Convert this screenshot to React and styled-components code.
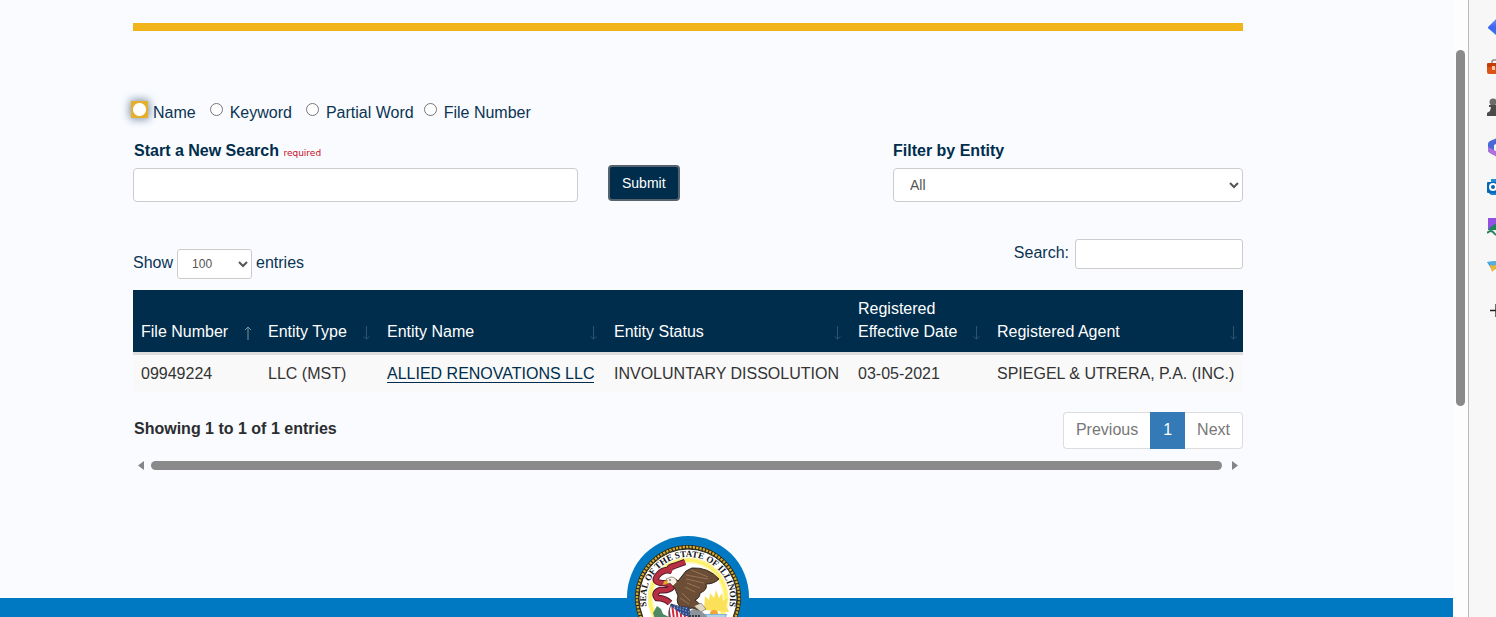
import React, { useState } from 'react'
import styled, { createGlobalStyle } from 'styled-components'

const GlobalStyle = createGlobalStyle`
  * {
    box-sizing: border-box;
  }

  body {
    margin: 0;
    background: #f9fbff;
    color: #0b3453;
    font-family: Arial, 'Liberation Sans', sans-serif;
    font-size: 16px;
    line-height: 23px;
  }
`

const Shell = styled.div`
  display: grid;
  grid-template-columns: minmax(0, 1fr) 15px 28px;
  height: 100vh;
  overflow: hidden;
`

const Page = styled.div`
  display: flex;
  flex-direction: column;
  min-height: 100vh;
`

const Content = styled.main`
  padding-right: 77px;
`

const Container = styled.div`
  max-width: 1110px;
  margin: 0 auto;
`

const Rule = styled.hr`
  height: 8px;
  margin: 23px 0 70px;
  border: 0;
  background: #f2b41b;
`

const Options = styled.fieldset`
  display: flex;
  flex-wrap: wrap;
  margin: 0;
  padding: 0;
  border: 0;
`

const Option = styled.label`
  display: flex;
  gap: 7px;
  margin-right: ${(props) => (props.$tight ? '10px' : '14px')};
`

const Radio = styled.input`
  width: 13px;
  height: 13px;
  margin: 2px 0 0;

  ${(props) =>
    props.$highlight &&
    `
    appearance: none;
    background: radial-gradient(circle, #ffffff 6px, #e5ae2b 7px);
    box-shadow: 0 0 0 2px #e5ae2b, 0 0 8px 3px #7488a0;

    &:checked {
      background: radial-gradient(circle, #0075ff 3px, #ffffff 4px, #ffffff 6px, #e5ae2b 7px);
    }
  `}
`

const SearchRow = styled.div`
  display: grid;
  grid-template-columns: 5fr 3fr 4fr;
  margin: 15px -15px 0;
`

const Column = styled.div`
  padding: 0 15px;
`

const FieldLabel = styled.label`
  display: block;
  margin-bottom: 6px;
  padding-left: ${(props) => (props.$indent ? '1px' : '0')};
  color: #002d4c;
  font-weight: bold;
`

const Required = styled.span`
  color: #c80a1e;
  font-family: 'DejaVu Sans', Verdana, sans-serif;
  font-size: 9px;
  font-weight: normal;
  line-height: 1;
`

const TextInput = styled.input`
  width: ${(props) => (props.$small ? '168px' : '100%')};
  height: ${(props) => (props.$small ? '30px' : '34px')};
  padding: 5px 10px;
  border: 1px solid #cccccc;
  border-radius: ${(props) => (props.$small ? '3px' : '4px')};
  background: #ffffff;
  color: #555555;
  font: inherit;
`

const Select = styled.select`
  width: ${(props) => (props.$small ? '75px' : '100%')};
  height: ${(props) => (props.$small ? '30px' : '34px')};
  padding: ${(props) => (props.$small ? '5px 10px' : '6px 12px')};
  border: 1px solid #cccccc;
  border-radius: ${(props) => (props.$small ? '3px' : '4px')};
  background: #ffffff;
  color: #555555;
  font-family: inherit;
  font-size: ${(props) => (props.$small ? '12px' : '14px')};
`

const SubmitButton = styled.button`
  height: 36px;
  margin-top: 26px;
  padding: 0 12px;
  border: 2px solid #56636c;
  border-radius: 4px;
  background: #002d4c;
  color: #ffffff;
  font-family: inherit;
  font-size: 14px;
`

const TableControls = styled.div`
  display: flex;
  justify-content: space-between;
  align-items: flex-start;
  margin-top: 37px;
  margin-bottom: 11px;
`

const Control = styled.label`
  display: flex;
  gap: ${(props) => (props.$wide ? '6px' : '4px')};
  margin-top: ${(props) => (props.$lower ? '10px' : '0')};

  span {
    padding-top: 2px;
  }
`

const Table = styled.table`
  width: 100%;
  border-collapse: collapse;
  table-layout: fixed;
`

const Col = styled.col`
  width: ${(props) => props.$width};
`

const TableHeader = styled.th`
  padding: 7px 8px 9px;
  border-bottom: 3px solid #dddddd;
  background: #002d4c;
  background-clip: padding-box;
  vertical-align: bottom;

  &:last-child {
    padding-right: 5px;
  }
`

const SortButton = styled.button`
  display: flex;
  justify-content: space-between;
  align-items: flex-end;
  width: 100%;
  padding: 0;
  border: 0;
  background: none;
  color: #ffffff;
  font: inherit;
  font-weight: normal;
  text-align: left;
`

const SortIcon = styled.svg`
  flex: none;
  width: 8px;
  height: 16px;
  margin-bottom: 2px;
  fill: none;
  stroke: ${(props) => (props.$active ? '#7693a7' : '#2f536e')};
`

const TableCell = styled.td`
  padding: 7px 8px;
  background: #f9f9f9;
  color: #333333;
  white-space: nowrap;
`

const EntityLink = styled.a`
  border-bottom: 1px solid #002d4c;
  color: #002d4c;
  text-decoration: none;
`

const TableFooter = styled.div`
  display: flex;
  justify-content: space-between;
  margin-top: 20px;
`

const Summary = styled.div`
  padding: 5px 1px;
  color: #2b2d30;
  font-weight: bold;
`

const Pagination = styled.nav`
  display: flex;
`

const PageButton = styled.button`
  padding: 5px 12px 7px;
  border: 1px solid ${(props) => (props.$active ? '#337ab7' : '#dddddd')};
  border-left-width: ${(props) => (props.$first || props.$active ? '1px' : '0')};
  border-right-width: ${(props) => (props.$first ? '0' : '1px')};
  border-radius: ${(props) =>
    props.$first ? '4px 0 0 4px' : props.$last ? '0 4px 4px 0' : '0'};
  background: ${(props) => (props.$active ? '#337ab7' : '#ffffff')};
  color: ${(props) => (props.$active ? '#ffffff' : '#777777')};
  font: inherit;
`

const HorizontalScroll = styled.div`
  display: flex;
  align-items: center;
  gap: 7px;
  margin-top: 12px;
  padding: 0 5px;

  svg {
    flex: none;
    width: 6px;
    height: 9px;
    fill: #858585;
  }
`

const HorizontalThumb = styled.div`
  flex: 1;
  height: 9px;
  margin-right: 3px;
  border-radius: 5px;
  background: #8a8a8a;
`

const Footer = styled.footer`
  flex: 1;
  display: flex;
  justify-content: center;
  align-items: flex-start;
  margin-top: 128px;
  padding-right: 77px;
  background: #0079c2;
`

const SealImage = styled.svg`
  flex: none;
  width: 122px;
  height: 122px;
  margin-top: -62px;
`

const ScrollTrack = styled.div`
  padding: 50px 3px 0;
  background: #fdfdfd;
`

const ScrollThumb = styled.div`
  height: 356px;
  border-radius: 5px;
  background: #8a8a8a;
`

const Sidebar = styled.aside`
  display: flex;
  flex-direction: column;
  gap: 20px;
  padding: 17px 0 0 18px;
  overflow: hidden;
  border-left: 1px solid #b9b9b9;
  background: #f7f7f7;

  svg {
    flex: none;
    width: 20px;
    height: 20px;
  }

  svg:last-child {
    margin-top: 4px;
  }
`

const searchTypes = ['Name', 'Keyword', 'Partial Word', 'File Number']

const columns = [
  { label: 'File Number', width: '127px' },
  { label: 'Entity Type', width: '119px' },
  { label: 'Entity Name', width: '227px' },
  { label: 'Entity Status', width: '244px' },
  { label: 'Registered Effective Date', width: '139px' },
  { label: 'Registered Agent', width: 'auto' },
]

const entities = [
  {
    fileNumber: '09949224',
    type: 'LLC (MST)',
    name: 'ALLIED RENOVATIONS LLC',
    status: 'INVOLUNTARY DISSOLUTION',
    date: '03-05-2021',
    agent: 'SPIEGEL & UTRERA, P.A. (INC.)',
  },
]

function SearchForm() {
  const [searchType, setSearchType] = useState('')
  const [term, setTerm] = useState('')

  return (
    <form onSubmit={(e) => e.preventDefault()}>
      <Options aria-label="Search type">
        {searchTypes.map((type, index) => (
          <Option key={type} $tight={index === 2}>
            <Radio
              type="radio"
              name="searchType"
              checked={searchType === type}
              onChange={() => setSearchType(type)}
              $highlight={index === 0}
            />
            {type}
          </Option>
        ))}
      </Options>
      <SearchRow>
        <Column>
          <FieldLabel htmlFor="term" $indent>
            Start a New Search <Required>required</Required>
          </FieldLabel>
          <TextInput
            id="term"
            type="text"
            value={term}
            onChange={(e) => setTerm(e.target.value)}
          />
        </Column>
        <Column>
          <SubmitButton type="submit">Submit</SubmitButton>
        </Column>
        <Column>
          <FieldLabel htmlFor="entityFilter">Filter by Entity</FieldLabel>
          <Select id="entityFilter">
            <option>All</option>
          </Select>
        </Column>
      </SearchRow>
    </form>
  )
}

function EntityTable() {
  return (
    <Table>
      <colgroup>
        {columns.map((column) => (
          <Col key={column.label} $width={column.width} />
        ))}
      </colgroup>
      <thead>
        <tr>
          {columns.map((column, index) => (
            <TableHeader key={column.label}>
              <SortButton type="button">
                {column.label}
                <SortIcon viewBox="0 0 8 16" $active={index === 0}>
                  {index === 0 ? (
                    <path d="M4 15V2M1 5l3-3 3 3" />
                  ) : (
                    <path d="M3.500 1v13M.5 11.500l3 2.500 3-2.500" />
                  )}
                </SortIcon>
              </SortButton>
            </TableHeader>
          ))}
        </tr>
      </thead>
      <tbody>
        {entities.map((entity) => (
          <tr key={entity.fileNumber}>
            <TableCell>{entity.fileNumber}</TableCell>
            <TableCell>{entity.type}</TableCell>
            <TableCell>
              <EntityLink href="#entity">{entity.name}</EntityLink>
            </TableCell>
            <TableCell>{entity.status}</TableCell>
            <TableCell>{entity.date}</TableCell>
            <TableCell>{entity.agent}</TableCell>
          </tr>
        ))}
      </tbody>
    </Table>
  )
}

function StateSeal() {
  return (
    <SealImage viewBox="0 0 122 122" role="img" aria-label="State seal">
      <defs>
        <radialGradient id="glow">
          <stop offset="0.84" stopColor="#ffffff" />
          <stop offset="0.92" stopColor="#fff05a" />
          <stop offset="1" stopColor="#fdf3a0" />
        </radialGradient>
        <path id="ringText" d="M20.500 74A42 42 0 1 1 101.500 74" />
        <clipPath id="shieldClip">
          <path d="M44 68q10 4 18 3 3 14-11 24Q37 84 44 68z" />
        </clipPath>
      </defs>
      <circle cx="61" cy="61" r="61" fill="#0079c2" />
      <circle cx="61" cy="62" r="53" fill="#2c2716" />
      <circle
        cx="61"
        cy="62"
        r="51"
        fill="none"
        stroke="#d9ad2c"
        strokeWidth="2.500"
        strokeDasharray="2.2 1.2"
      />
      <circle cx="61" cy="62" r="49" fill="#ffffff" stroke="#2c2716" />
      <circle cx="61" cy="62" r="40.500" fill="url(#glow)" />
      <text fill="#111111" fontFamily="Liberation Serif, serif" fontSize="9" fontWeight="bold">
        <textPath href="#ringText" startOffset="50%" textAnchor="middle">
          SEAL OF THE STATE OF ILLINOIS
        </textPath>
      </text>
      {/* sun and water */}
      <path
        d="M77 74l1-14 4 4 1-7 4 5 2-8 3 8 3-5 1 8 5-3-2 7 3 7z"
        fill="#fbe05a"
      />
      <circle cx="87" cy="78" r="4" fill="#f3a431" />
      <path d="M72 78h28l-4 12H72z" fill="#7db4d6" />
      <path d="M75 80h23M77 83h18" stroke="#e8f1f5" />
      <path d="M26 77l4-7 4 3 2 5 6 3v8H30z" fill="#4d8a63" />
      {/* banner */}
      <path
        d="M58 26L47 30q-8 2-2 5-8-3-14 4-6 7 4 8 8 0 10 4-3 4-12 3-7 3-3 8 8 0 13 5"
        fill="none"
        stroke="#571b2b"
        strokeWidth="6.500"
      />
      <path
        d="M58 26L47 30q-8 2-2 5-8-3-14 4-6 7 4 8 8 0 10 4-3 4-12 3-7 3-3 8 8 0 13 5"
        fill="none"
        stroke="#b82e43"
        strokeWidth="4.500"
      />
      {/* eagle */}
      <path
        d="M44 44q3-3 7 1l8-10 6-3q16-1 27 11-5 5-13 5 2 6-6 9 0 5-5 7l8 7-2 5-8-4-10 1q-8-5-5-13-2-8-8-13z"
        fill="#6c4d35"
        stroke="#30231b"
      />
      <path
        d="M59 39l22 4M59 43l18 4M60 47l13 5M58 51l10 5M55 57l8 8M53 62l9 6M64 34l17 7"
        stroke="#a08060"
        strokeWidth="0.800"
      />
      <path d="M39 43l5-2q5 0 6 5l-4 4-3-3-5 1 2-3z" fill="#f4f0e4" stroke="#6c5637" strokeWidth="0.600" />
      <path d="M37 45l4-1-1 4-4 1z" fill="#e6a625" />
      <circle cx="43" cy="44" r="0.800" fill="#222222" />
      <path d="M67 70l7-3 5 6-5 3z" fill="#e2d7c4" stroke="#57483b" strokeWidth="0.500" />
      <path d="M58 78l8-5 8 2 6 5-2 9H60z" fill="#8e949b" />
      <path d="M62 80h12" stroke="#39404a" strokeWidth="2" strokeDasharray="2 1" />
      {/* shield */}
      <g clipPath="url(#shieldClip)">
        <path d="M38 66h30v30H38z" fill="#ffffff" />
        <path
          d="M41 67l3 23M45 68l3 23M49 70l3 23M53 72l3 23M57 74l3 23"
          stroke="#cf2b3f"
          strokeWidth="2"
        />
        <path d="M44 66h21v16l-9-3-12-9z" fill="#294a8d" />
        <path
          d="M47 71l15 5M50 70l11 3M53 76l9 3"
          stroke="#ffffff"
          strokeWidth="0.900"
          strokeDasharray="1 2"
        />
      </g>
      <path d="M44 68q10 4 18 3 3 14-11 24Q37 84 44 68z" fill="none" stroke="#263252" strokeWidth="0.800" />
    </SealImage>
  )
}

function BrowserSidebar() {
  return (
    <Sidebar aria-label="Browser sidebar">
      <svg viewBox="0 0 20 20">
        <defs>
          <linearGradient id="tag" x2="0" y2="1">
            <stop stopColor="#6f9bfa" />
            <stop offset="0.500" stopColor="#3f63f0" />
            <stop offset="1" stopColor="#2b7bea" />
          </linearGradient>
        </defs>
        <path d="M2 9l7-7q1-1 3-1h8v18h-8q-2 0-3-1l-7-6q-2-1 0-3z" fill="url(#tag)" />
      </svg>
      <svg viewBox="0 0 20 20">
        <path d="M5 6V5q0-2 2-2h6q2 0 2 2v1" fill="none" stroke="#8a8a8a" strokeWidth="1.500" />
        <rect y="6" width="20" height="11" rx="2" fill="#dd5216" />
        <path d="M0 7q0-1 2-1h18v4H0z" fill="#c23b08" />
        <path d="M5 9h3v4H5z" fill="#f5c9a6" />
      </svg>
      <svg viewBox="0 0 20 20">
        <circle cx="6" cy="5" r="3.500" fill="#6c6c6c" />
        <path d="M2 8h9v2H9l1 4 3 2v3H0v-3l3-2 1-4H2z" fill="#4b4b4b" />
      </svg>
      <svg viewBox="0 0 20 20">
        <path d="M10 1L3 4Q1 5 1 7v6q0 2 2 3l4 2V8l6-3V2z" fill="#4b68d8" />
        <path d="M1 10v3q0 2 2 3l7 4 7-4-3-3-4 2-3-2z" fill="#ae70dc" />
        <path d="M10 1l7 3v7l-3-1V7l-4-2z" fill="#6359c9" />
      </svg>
      <svg viewBox="0 0 20 20">
        <path d="M4 2h16v15H4z" fill="#1c8fdb" />
        <rect y="5" width="12" height="11" rx="1" fill="#0867b5" />
        <circle cx="6" cy="10" r="3" fill="none" stroke="#ffffff" strokeWidth="2" />
        <path d="M2 16h18v2H5q-2 0-3-2z" fill="#1480cf" />
      </svg>
      <svg viewBox="0 0 20 20">
        <path d="M1 1h18v12H1z" fill="#9250e4" />
        <path d="M1 13q4-5 8-6l10-1v7z" fill="#188657" />
        <path d="M0 16q4-4 7 0t6 0" fill="none" stroke="#24815c" strokeWidth="2" />
      </svg>
      <svg viewBox="0 0 20 20">
        <path d="M0 5l20-2-8 14-3-5-4 1z" fill="#3c9ed8" />
        <path d="M3 8l17-5L8 12l-3 3z" fill="#f2b52f" />
        <path d="M0 5l20-2-14 6z" fill="#55aee2" />
      </svg>
      <svg viewBox="0 0 20 20">
        <path d="M3 9.500h14M9 3v13" stroke="#222222" strokeWidth="1.300" />
      </svg>
    </Sidebar>
  )
}

function App() {
  return (
    <>
      <GlobalStyle />
      <Shell>
        <Page>
          <Content>
            <Container>
              <Rule />
              <SearchForm />
              <TableControls>
                <Control $lower>
                  <span>Show</span>
                  <Select $small>
                    <option>100</option>
                  </Select>
                  <span>entries</span>
                </Control>
                <Control $wide>
                  <span>Search:</span>
                  <TextInput type="search" $small />
                </Control>
              </TableControls>
              <EntityTable />
              <TableFooter>
                <Summary>Showing 1 to 1 of 1 entries</Summary>
                <Pagination aria-label="Table pages">
                  <PageButton type="button" $first>
                    Previous
                  </PageButton>
                  <PageButton type="button" $active>
                    1
                  </PageButton>
                  <PageButton type="button" $last>
                    Next
                  </PageButton>
                </Pagination>
              </TableFooter>
              <HorizontalScroll>
                <svg viewBox="0 0 6 9">
                  <path d="M6 0v9L0 4.500z" />
                </svg>
                <HorizontalThumb />
                <svg viewBox="0 0 6 9">
                  <path d="M0 0v9l6-4.500z" />
                </svg>
              </HorizontalScroll>
            </Container>
          </Content>
          <Footer>
            <StateSeal />
          </Footer>
        </Page>
        <ScrollTrack>
          <ScrollThumb />
        </ScrollTrack>
        <BrowserSidebar />
      </Shell>
    </>
  )
}

export default App
